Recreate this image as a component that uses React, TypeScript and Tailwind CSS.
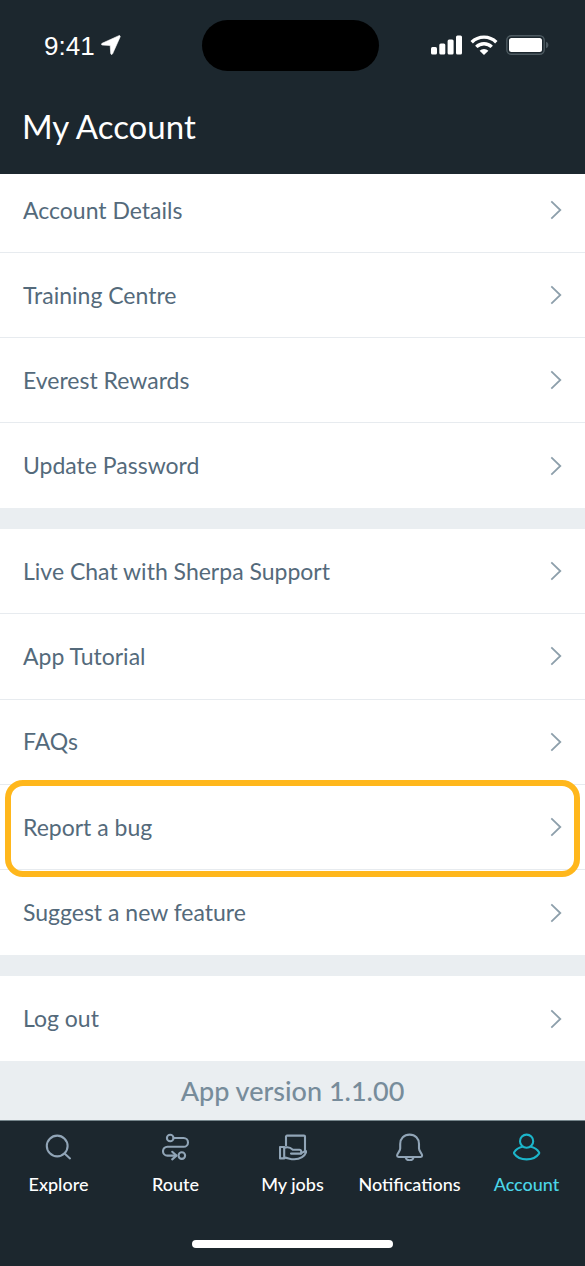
import clsx from "clsx";
import React from "react";

type Row = {
    title: string;
    highlighted?: boolean;
};

type Tab = {
    title: string;
    icon: React.ReactNode;
    active?: boolean;
};

const groups: Row[][] = [
    [
        { title: "Account Details" },
        { title: "Training Centre" },
        { title: "Everest Rewards" },
        { title: "Update Password" },
    ],
    [
        { title: "Live Chat with Sherpa Support" },
        { title: "App Tutorial" },
        { title: "FAQs" },
        { title: "Report a bug", highlighted: true },
        { title: "Suggest a new feature" },
    ],
    [{ title: "Log out" }],
];

const TabIcon = ({ children }: { children: React.ReactNode }) => (
    <svg
        viewBox="0 0 28 28"
        className="w-7 h-7"
        fill="none"
        stroke="currentColor"
        strokeWidth="2.1"
        strokeLinecap="round"
        strokeLinejoin="round"
        aria-hidden="true"
    >
        {children}
    </svg>
);

const tabs: Tab[] = [
    {
        title: "Explore",
        icon: (
            <TabIcon>
                <circle cx="12.2" cy="13" r="10.4" />
                <path d="M19.6 20.4 25 25.4" />
            </TabIcon>
        ),
    },
    {
        title: "Route",
        icon: (
            <TabIcon>
                <circle cx="8.2" cy="5" r="3.3" />
                <path d="M11.6 5h10a4.4 4.4 0 0 1 0 8.8H5.4a4.400 4.400 0 0 0 0 8.800h8.600" />
                <path d="M10.2 18.800 14.400 22.600l-4.200 3.800" />
                <circle cx="19.800" cy="22.600" r="3.300" />
            </TabIcon>
        ),
    },
    {
        title: "My jobs",
        icon: (
            <TabIcon>
                <path d="M7 12.400V3.600a1 1 0 0 1 1-1h17a1 1 0 0 1 1 1v14" />
                <path d="M1 14h4.200v11.400H1z" />
                <path d="M5.400 14.800c3.400-1.200 6.200-.2 8.400 2h6.800c1.800 0 1.900 2 1.400 3.800H12" />
                <path d="M22 20.400c1.800-1.200 3.600-2.300 5.300-2.100-.8 4.700-6.500 8-12.100 8-3.800 0-6-1.300-9.600-1.700" />
            </TabIcon>
        ),
    },
    {
        title: "Notifications",
        icon: (
            <TabIcon>
                <path d="M13.600 1.600c-5.700 0-9.400 4-9.400 9.300v4.700c0 2.600-3.100 4.700-3.100 7 0 .8.500 1.400 1.400 1.400h22.200c.9 0 1.400-.6 1.400-1.400 0-2.300-3.100-4.400-3.100-7v-4.700c0-5.300-3.700-9.300-9.400-9.300z" />
                <path d="M9.500 24.300c.6 2 2.200 3 4.100 3s3.500-1 4.100-3" />
            </TabIcon>
        ),
    },
    {
        title: "Account",
        active: true,
        icon: (
            <TabIcon>
                <circle cx="13.600" cy="8.200" r="6.600" />
                <path d="M9.200 13.800C5.400 14.700 2.800 16.700 1.200 19.200c-.3.500-.3.900 0 1.400C3.500 24 8 26.400 13.600 26.400s10.100-2.400 12.400-5.800c.3-.5.3-.9 0-1.400-1.600-2.500-4.200-4.500-8-5.400" />
            </TabIcon>
        ),
    },
];

const StatusBar = () => (
    <div className="grid grid-cols-[1fr_auto_1fr] items-center h-[90px] pr-1 text-white">
        <div className="flex items-center gap-1.5 pl-11">
            <span className="pt-0.5 font-['Liberation_Sans',sans-serif] text-[26px]">
                9:41
            </span>
            <svg viewBox="0 0 20 20" className="w-5 h-5" aria-hidden="true">
                <path
                    d="M17.800.7 1.100 8.300c-1 .5-.8 1.700.3 1.800l7.800.4.500 8c.1 1.200 1.400 1.400 1.900.3L19.100 2c.4-.9-.3-1.700-1.300-1.300z"
                    fill="currentColor"
                    stroke="currentColor"
                    strokeWidth="0.600"
                />
            </svg>
        </div>
        <div className="w-[177px] h-[51px] rounded-full bg-black" />
        <div className="flex items-center justify-end gap-2 pr-8">
            <svg
                viewBox="0 0 31 20"
                className="w-[31px] h-5"
                fill="currentColor"
                aria-hidden="true"
            >
                <rect x="0" y="12" width="6" height="7.500" rx="1.500" />
                <rect x="8.300" y="8.500" width="6" height="11" rx="1.500" />
                <rect x="16.600" y="4.500" width="6" height="15" rx="1.500" />
                <rect x="25" y="0.500" width="6" height="19" rx="1.500" />
            </svg>
            <svg
                viewBox="0 0 28 20"
                className="w-7 h-5"
                fill="none"
                stroke="currentColor"
                strokeWidth="3.400"
                aria-hidden="true"
            >
                <path d="M1.700 7.200a17.500 17.500 0 0 1 24.600 0" />
                <path d="M6.300 11.900a11 11 0 0 1 15.400 0" />
                <path
                    d="M14 20l-4.400-4.300a6.300 6.300 0 0 1 8.800 0z"
                    fill="currentColor"
                    stroke="none"
                />
            </svg>
            <svg viewBox="0 0 43 20" className="w-[43px] h-5" aria-hidden="true">
                <rect
                    x="0.800"
                    y="0.800"
                    width="37.400"
                    height="18.400"
                    rx="4.500"
                    fill="none"
                    stroke="#4d5a61"
                    strokeWidth="1.400"
                />
                <rect x="3" y="3" width="33" height="14" rx="2.500" fill="white" />
                <path d="M40 6.800c3.200 1 3.200 5.400 0 6.400z" fill="#4d5a61" />
            </svg>
        </div>
    </div>
);

const MenuRow = ({ title, highlighted }: Row) => (
    <li className="relative flex grow min-h-[85px] border-b border-[#e7ebef] last:border-b-0">
        <button className="flex grow items-center justify-between px-[23px] text-left">
            <span>{title}</span>
            <svg
                viewBox="0 0 12 20"
                className="w-3 h-5"
                fill="none"
                stroke="#8d9fab"
                strokeWidth="1.800"
                aria-hidden="true"
            >
                <path d="M1.300 1.300 10.300 10l-9 8.700" />
            </svg>
        </button>
        {highlighted && (
            <span className="absolute -top-[5px] -bottom-2 inset-x-[5px] z-10 rounded-[18px] border-6 border-[#ffb71c] pointer-events-none" />
        )}
    </li>
);

const App = () => {
    return (
        <div className="flex flex-col min-h-screen bg-[#eaeef1] font-[Lato,sans-serif]">
            <header className="h-[174px] shrink-0 bg-[#1c272e]">
                <StatusBar />
                <h1 className="pl-[22px] pt-4 text-[33px] leading-10 text-white">
                    My Account
                </h1>
            </header>

            <main className="flex flex-col grow">
                <div className="flex flex-col grow gap-[21px] overflow-hidden text-[23px] text-[#546a7b]">
                    {groups.map((rows, index) => (
                        <ul
                            key={index}
                            className={clsx(
                                "flex flex-col bg-white",
                                index === 0 && "-mt-1.5",
                                index === 1 && "grow"
                            )}
                        >
                            {rows.map((row) => (
                                <MenuRow key={row.title} {...row} />
                            ))}
                        </ul>
                    ))}
                </div>
                <p className="h-[59px] shrink-0 text-center font-medium text-[27px] leading-[59px] text-[#778c9b]">
                    App version 1.1.00
                </p>
            </main>

            <nav className="h-[146px] shrink-0 border-t border-[#75858b] bg-[#1c272e]">
                <ul className="grid grid-cols-5 pt-3">
                    {tabs.map((tab) => (
                        <li key={tab.title}>
                            <a
                                href="#"
                                aria-current={tab.active ? "page" : undefined}
                                className={clsx(
                                    "flex flex-col items-center gap-[11px] font-medium text-lg leading-6",
                                    tab.active ? "text-[#4bd5e8]" : "text-white"
                                )}
                            >
                                <span
                                    className={
                                        tab.active
                                            ? "text-[#1cb5ca]"
                                            : "text-[#91a5b7]"
                                    }
                                >
                                    {tab.icon}
                                </span>
                                {tab.title}
                            </a>
                        </li>
                    ))}
                </ul>
                <div className="mx-auto mt-11 w-[201px] h-2 rounded-full bg-white" />
            </nav>
        </div>
    );
};

export default App;
